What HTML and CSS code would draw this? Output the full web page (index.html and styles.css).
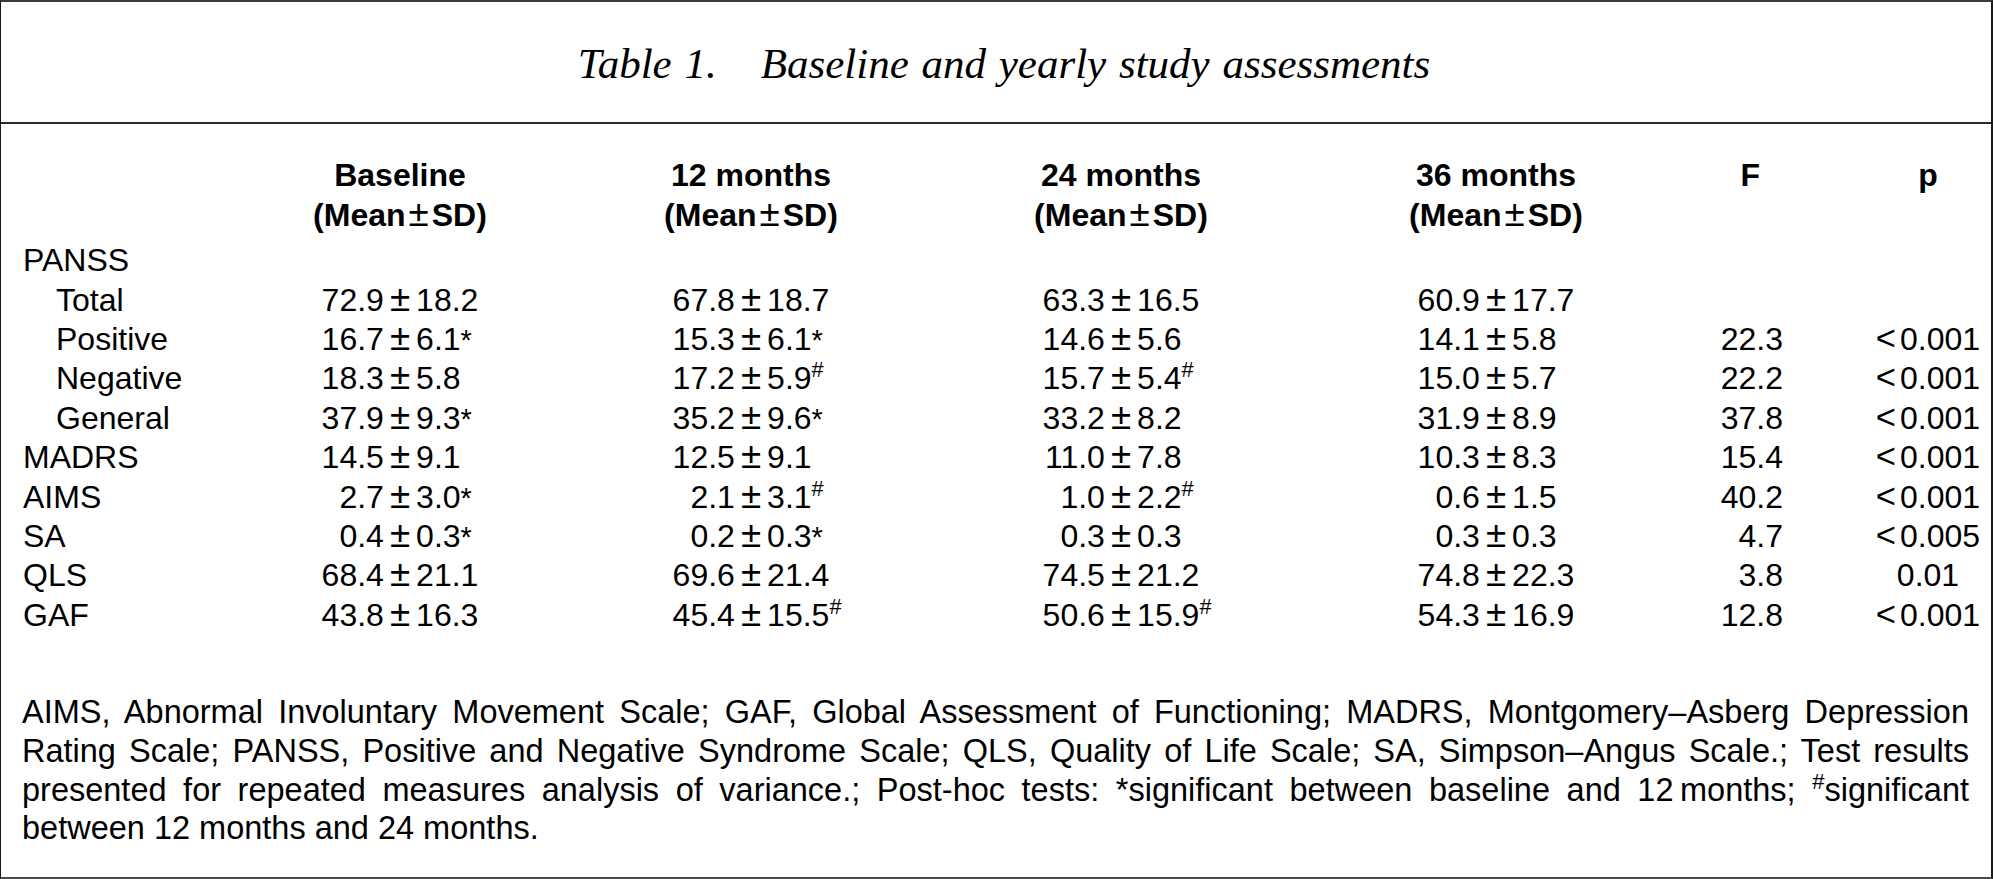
FILE: index.html
```html
<!DOCTYPE html>
<html lang="en">
<head>
<meta charset="utf-8">
<title>Table 1. Baseline and yearly study assessments</title>
<link rel="stylesheet" href="styles.css">
</head>
<body>
<div class="table-box">
  <div class="title">
    <span class="title-label">Table 1.</span><span class="title-text">Baseline and yearly study assessments</span>
  </div>

  <div class="data">
    <div class="row head">
      <div class="lbl"></div>
      <div class="hcell">Baseline<br>(Mean<span class="hpm">±</span>SD)</div>
      <div class="hcell">12 months<br>(Mean<span class="hpm">±</span>SD)</div>
      <div class="hcell">24 months<br>(Mean<span class="hpm">±</span>SD)</div>
      <div class="hcell">36 months<br>(Mean<span class="hpm">±</span>SD)</div>
      <div class="hcell f">F</div>
      <div class="hcell p">p</div>
    </div>

    <div class="row">
      <div class="lbl">PANSS</div>
    </div>

    <div class="row">
      <div class="lbl sub">Total</div>
      <div class="val"><span class="l">72.9</span><span class="pm">±</span><span class="r">18.2</span></div>
      <div class="val"><span class="l">67.8</span><span class="pm">±</span><span class="r">18.7</span></div>
      <div class="val"><span class="l">63.3</span><span class="pm">±</span><span class="r">16.5</span></div>
      <div class="val"><span class="l">60.9</span><span class="pm">±</span><span class="r">17.7</span></div>
      <div class="fv"></div>
      <div class="pv"></div>
    </div>

    <div class="row">
      <div class="lbl sub">Positive</div>
      <div class="val"><span class="l">16.7</span><span class="pm">±</span><span class="r">6.1<span class="ast">*</span></span></div>
      <div class="val"><span class="l">15.3</span><span class="pm">±</span><span class="r">6.1<span class="ast">*</span></span></div>
      <div class="val"><span class="l">14.6</span><span class="pm">±</span><span class="r">5.6</span></div>
      <div class="val"><span class="l">14.1</span><span class="pm">±</span><span class="r">5.8</span></div>
      <div class="fv">22.3</div>
      <div class="pv"><span class="lt">&lt;</span>0.001</div>
    </div>

    <div class="row">
      <div class="lbl sub">Negative</div>
      <div class="val"><span class="l">18.3</span><span class="pm">±</span><span class="r">5.8</span></div>
      <div class="val"><span class="l">17.2</span><span class="pm">±</span><span class="r">5.9<sup class="hash">#</sup></span></div>
      <div class="val"><span class="l">15.7</span><span class="pm">±</span><span class="r">5.4<sup class="hash">#</sup></span></div>
      <div class="val"><span class="l">15.0</span><span class="pm">±</span><span class="r">5.7</span></div>
      <div class="fv">22.2</div>
      <div class="pv"><span class="lt">&lt;</span>0.001</div>
    </div>

    <div class="row">
      <div class="lbl sub">General</div>
      <div class="val"><span class="l">37.9</span><span class="pm">±</span><span class="r">9.3<span class="ast">*</span></span></div>
      <div class="val"><span class="l">35.2</span><span class="pm">±</span><span class="r">9.6<span class="ast">*</span></span></div>
      <div class="val"><span class="l">33.2</span><span class="pm">±</span><span class="r">8.2</span></div>
      <div class="val"><span class="l">31.9</span><span class="pm">±</span><span class="r">8.9</span></div>
      <div class="fv">37.8</div>
      <div class="pv"><span class="lt">&lt;</span>0.001</div>
    </div>

    <div class="row">
      <div class="lbl">MADRS</div>
      <div class="val"><span class="l">14.5</span><span class="pm">±</span><span class="r">9.1</span></div>
      <div class="val"><span class="l">12.5</span><span class="pm">±</span><span class="r">9.1</span></div>
      <div class="val"><span class="l">11.0</span><span class="pm">±</span><span class="r">7.8</span></div>
      <div class="val"><span class="l">10.3</span><span class="pm">±</span><span class="r">8.3</span></div>
      <div class="fv">15.4</div>
      <div class="pv"><span class="lt">&lt;</span>0.001</div>
    </div>

    <div class="row">
      <div class="lbl">AIMS</div>
      <div class="val"><span class="l">2.7</span><span class="pm">±</span><span class="r">3.0<span class="ast">*</span></span></div>
      <div class="val"><span class="l">2.1</span><span class="pm">±</span><span class="r">3.1<sup class="hash">#</sup></span></div>
      <div class="val"><span class="l">1.0</span><span class="pm">±</span><span class="r">2.2<sup class="hash">#</sup></span></div>
      <div class="val"><span class="l">0.6</span><span class="pm">±</span><span class="r">1.5</span></div>
      <div class="fv">40.2</div>
      <div class="pv"><span class="lt">&lt;</span>0.001</div>
    </div>

    <div class="row">
      <div class="lbl">SA</div>
      <div class="val"><span class="l">0.4</span><span class="pm">±</span><span class="r">0.3<span class="ast">*</span></span></div>
      <div class="val"><span class="l">0.2</span><span class="pm">±</span><span class="r">0.3<span class="ast">*</span></span></div>
      <div class="val"><span class="l">0.3</span><span class="pm">±</span><span class="r">0.3</span></div>
      <div class="val"><span class="l">0.3</span><span class="pm">±</span><span class="r">0.3</span></div>
      <div class="fv">4.7</div>
      <div class="pv"><span class="lt">&lt;</span>0.005</div>
    </div>

    <div class="row">
      <div class="lbl">QLS</div>
      <div class="val"><span class="l">68.4</span><span class="pm">±</span><span class="r">21.1</span></div>
      <div class="val"><span class="l">69.6</span><span class="pm">±</span><span class="r">21.4</span></div>
      <div class="val"><span class="l">74.5</span><span class="pm">±</span><span class="r">21.2</span></div>
      <div class="val"><span class="l">74.8</span><span class="pm">±</span><span class="r">22.3</span></div>
      <div class="fv">3.8</div>
      <div class="pv">0.01</div>
    </div>

    <div class="row">
      <div class="lbl">GAF</div>
      <div class="val"><span class="l">43.8</span><span class="pm">±</span><span class="r">16.3</span></div>
      <div class="val"><span class="l">45.4</span><span class="pm">±</span><span class="r">15.5<sup class="hash">#</sup></span></div>
      <div class="val"><span class="l">50.6</span><span class="pm">±</span><span class="r">15.9<sup class="hash">#</sup></span></div>
      <div class="val"><span class="l">54.3</span><span class="pm">±</span><span class="r">16.9</span></div>
      <div class="fv">12.8</div>
      <div class="pv"><span class="lt">&lt;</span>0.001</div>
    </div>
  </div>

  <div class="notes">
    <span class="line">AIMS, Abnormal Involuntary Movement Scale; GAF, Global Assessment of Functioning; MADRS, Montgomery–Asberg Depression</span>
    <span class="line">Rating Scale; PANSS, Positive and Negative Syndrome Scale; QLS, Quality of Life Scale; SA, Simpson–Angus Scale.; Test results</span>
    <span class="line">presented for repeated measures analysis of variance.; Post-hoc tests: *significant between baseline and 12&thinsp;months; <sup class="hash">#</sup>significant</span>
    <span class="line last">between 12 months and 24 months.</span>
  </div>
</div>
</body>
</html>
```

FILE: styles.css
```css
html, body {
  margin: 0;
  padding: 0;
  background: #ffffff;
}

body {
  width: 1993px;
  height: 879px;
  overflow: hidden;
}

.table-box {
  box-sizing: border-box;
  width: 1993px;
  height: 879px;
  border-top: 2px solid #3c3c3c;
  border-left: 1px solid #1a1a1a;
  border-right: 2px solid #1a1a1a;
  border-bottom: 2px solid #4a4a4a;
  color: #000;
  font-family: "Liberation Sans", Arial, Helvetica, sans-serif;
  font-size: 32px;
  display: flex;
  flex-direction: column;
}

/* ---------- title ---------- */
.title {
  padding: 37.5px 0 34.5px 16px;
  border-bottom: 2px solid #2a2a2a;
  text-align: center;
  font-family: "Liberation Serif", "Times New Roman", serif;
  font-style: italic;
  font-size: 43px;
  line-height: 48px;
  word-spacing: 2px;
}

.title-label {
  margin-right: 44px;
}

/* ---------- data grid ---------- */
.data {
  padding: 32.2px 0 0 22px;
}

.row {
  display: grid;
  grid-template-columns: 207px 340px 362px 378px 372px 183px 126px;
  line-height: 39.4px;
  height: 39.4px;
}

.row.head {
  height: auto;
  margin-bottom: 6.2px;
  font-weight: bold;
}

.hcell {
  text-align: center;
}

.hpm {
  font-weight: normal;
  font-size: 1.15em;
  line-height: 0;
  padding: 0 3px;
}

.hcell.f {
  text-align: right;
  padding-right: 105px;
}

.hcell.p {
  text-align: center;
}

.lbl {
  white-space: nowrap;
}

.lbl.sub {
  padding-left: 33px;
}

.val {
  display: grid;
  grid-template-columns: minmax(0, 1fr) auto minmax(0, 1fr);
  align-items: baseline;
  white-space: nowrap;
}

.val .l {
  justify-self: end;
}

.val .pm {
  font-size: 1.15em;
  line-height: 36.1px;
  padding: 0 6px;
}

.val .r {
  justify-self: start;
}

.fv {
  text-align: right;
  padding-right: 82px;
}

.pv {
  text-align: center;
  white-space: nowrap;
}

.lt {
  font-size: 1.08em;
  line-height: 0;
  padding-right: 4px;
}

.ast {
  font-size: 0.9em;
}

.hash {
  font-size: 0.68em;
  line-height: 0;
  vertical-align: 0.55em;
}

/* ---------- footnotes ---------- */
.notes {
  padding: 58px 22px 0 21px;
  font-size: 32.5px;
  line-height: 38.7px;
}

.notes .line {
  display: block;
  text-align: justify;
  text-align-last: justify;
  white-space: nowrap;
}

.notes .line.last {
  text-align-last: left;
}
```
